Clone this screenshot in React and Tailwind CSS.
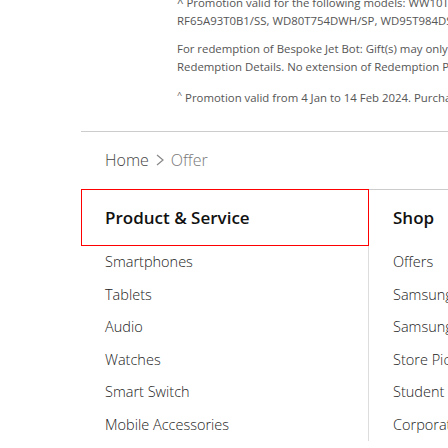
const font = "font-['Open_Sans','Liberation_Sans_Narrow',sans-serif] font-stretch-[92%]";

const products = [
  "Smartphones",
  "Tablets",
  "Audio",
  "Watches",
  "Smart Switch",
  "Mobile Accessories",
];

const shop = [
  "Offers",
  "Samsung Experience Store",
  "Samsung Rewards",
  "Store Pick-up",
  "Student Offers",
  "Corporate Offers",
];

export default function App() {
  return (
    <div className={"w-[448px] h-[448px] overflow-hidden bg-white " + font}>
      {/* footnotes */}
      <div className="pl-[177px] mt-[-6px] text-[11.4px] leading-[18px] text-[#555] whitespace-nowrap">
        <p>^ Promotion valid for the following models: WW10T754DWH/SP,</p>
        <p>RF65A93T0B1/SS, WD80T754DWH/SP, WD95T984DSH/SP</p>
        <p className="mt-[10px]">For redemption of Bespoke Jet Bot: Gift(s) may only be redeemed</p>
        <p>Redemption Details. No extension of Redemption Period</p>
        <p className="mt-[13px]">
          <sup className="text-[9px]">^</sup> Promotion valid from 4 Jan to 14 Feb 2024. Purchase
        </p>
      </div>

      <div className="ml-[81px] mt-[24px] border-t border-[#ccc]" />

      {/* breadcrumb */}
      <div className="ml-[105px] mt-[20px] flex items-center h-[16px] text-[16px] font-light leading-none">
        <span className="text-[#444]">Home</span>
        <svg width="12" height="14" viewBox="0 0 12 14" className="mx-[5px]">
          <polyline points="3,2 9,7 3,12" fill="none" stroke="#888" strokeWidth="1.2" />
        </svg>
        <span className="text-[#777]">Offer</span>
      </div>

      {/* menu */}
      <div className="ml-[81px] mt-[21px] flex">
        <div className="w-[288px] shrink-0 border-r border-[#ddd]">
          <div className="relative -mr-px h-[57px] border border-[#ff0000] flex items-center pl-[23px] text-[17px] font-semibold text-[#111]">
            Product &amp; Service
          </div>
          <ul>
            {products.map((p) => (
              <li
                key={p}
                className="h-[32.5px] flex items-center pl-[24px] text-[14.5px] font-light text-[#222]"
              >
                {p}
              </li>
            ))}
          </ul>
        </div>
        <div className="flex-1 min-w-0 whitespace-nowrap">
          <div className="h-[57px] border-t border-[#ccc] flex items-center pl-[24px] text-[17px] font-semibold text-[#111]">
            Shop
          </div>
          <ul>
            {shop.map((s) => (
              <li
                key={s}
                className="h-[32.5px] flex items-center pl-[24px] text-[14.5px] font-light text-[#222]"
              >
                {s}
              </li>
            ))}
          </ul>
        </div>
      </div>
    </div>
  );
}
